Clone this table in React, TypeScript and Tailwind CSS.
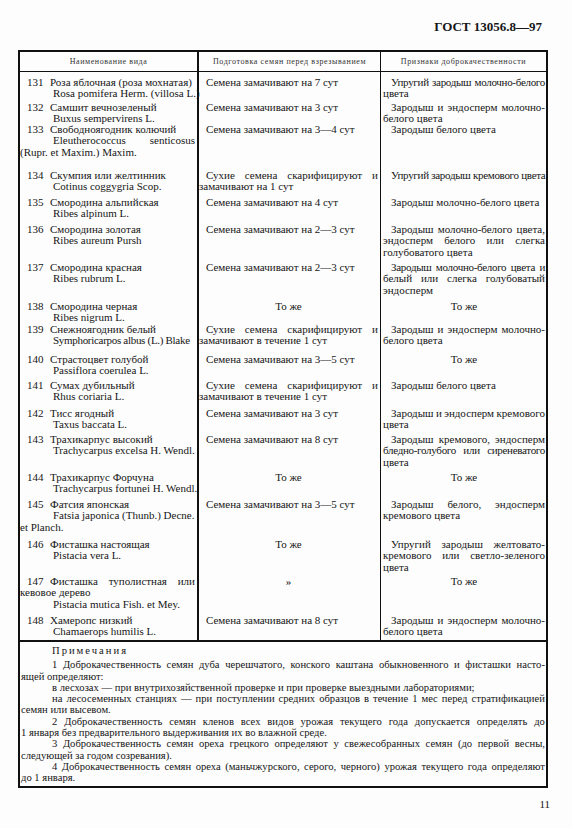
import clsx from "clsx";

type Line = {
  t: string;
  num?: string;
  pl?: string;
  j?: boolean;
  c?: boolean;
  s?: boolean;
};

type Row = {
  h: string;
  a: Line[];
  b: Line[];
  c: Line[];
};

const rows: Row[] = [
  {
    h: "h-[25px]",
    a: [{ num: "131", t: "Роза яблочная (роза мохнатая)" }, { t: "Rosa pomifera Herm. (villosa L.)", pl: "pl-[33px]" }],
    b: [{ t: "Семена замачивают на 7 сут", pl: "pl-[7px]" }],
    c: [{ t: "Упругий зародыш молочно-белого", pl: "pl-[8px]", j: true, s: true }, { t: "цвета" }],
  },
  {
    h: "h-[22px]",
    a: [{ num: "132", t: "Самшит вечнозеленый" }, { t: "Buxus sempervirens L.", pl: "pl-[33px]" }],
    b: [{ t: "Семена замачивают на 3 сут", pl: "pl-[7px]" }],
    c: [{ t: "Зародыш и эндосперм молочно-", pl: "pl-[8px]", j: true }, { t: "белого цвета" }],
  },
  {
    h: "h-[46px]",
    a: [
      { num: "133", t: "Свободноягодник колючий" },
      { t: "Eleutherococcus senticosus", pl: "pl-[33px]", j: true },
      { t: "(Rupr. et Maxim.) Maxim." },
    ],
    b: [{ t: "Семена замачивают на 3—4 сут", pl: "pl-[7px]" }],
    c: [{ t: "Зародыш белого цвета", pl: "pl-[8px]" }],
  },
  {
    h: "h-[27px]",
    a: [{ num: "134", t: "Скумпия или желтинник" }, { t: "Cotinus coggygria Scop.", pl: "pl-[33px]" }],
    b: [{ t: "Сухие семена скарифицируют и", pl: "pl-[7px]", j: true }, { t: "замачивают на 1 сут" }],
    c: [{ t: "Упругий зародыш кремового цвета", pl: "pl-[8px]", s: true }],
  },
  {
    h: "h-[27px]",
    a: [{ num: "135", t: "Смородина альпийская" }, { t: "Ribes alpinum L.", pl: "pl-[33px]" }],
    b: [{ t: "Семена замачивают на 4 сут", pl: "pl-[7px]" }],
    c: [{ t: "Зародыш молочно-белого цвета", pl: "pl-[8px]" }],
  },
  {
    h: "h-[38px]",
    a: [{ num: "136", t: "Смородина золотая" }, { t: "Ribes aureum Pursh", pl: "pl-[33px]" }],
    b: [{ t: "Семена замачивают на 2—3 сут", pl: "pl-[7px]" }],
    c: [
      { t: "Зародыш молочно-белого цвета,", pl: "pl-[8px]", j: true },
      { t: "эндосперм белого или слегка", j: true },
      { t: "голубоватого цвета" },
    ],
  },
  {
    h: "h-[39px]",
    a: [{ num: "137", t: "Смородина красная" }, { t: "Ribes rubrum L.", pl: "pl-[33px]" }],
    b: [{ t: "Семена замачивают на 2—3 сут", pl: "pl-[7px]" }],
    c: [
      { t: "Зародыш молочно-белого цвета и", pl: "pl-[8px]", j: true, s: true },
      { t: "белый или слегка голубоватый", j: true },
      { t: "эндосперм" },
    ],
  },
  {
    h: "h-[23px]",
    a: [{ num: "138", t: "Смородина черная" }, { t: "Ribes nigrum L.", pl: "pl-[33px]" }],
    b: [{ t: "То же", c: true }],
    c: [{ t: "То же", c: true }],
  },
  {
    h: "h-[30px]",
    a: [{ num: "139", t: "Снежноягодник белый" }, { t: "Symphoricarpos albus (L.) Blake", pl: "pl-[33px]", s: true }],
    b: [{ t: "Сухие семена скарифицируют и", pl: "pl-[7px]", j: true }, { t: "замачивают в течение 1 сут" }],
    c: [{ t: "Зародыш и эндосперм молочно-", pl: "pl-[8px]", j: true }, { t: "белого цвета" }],
  },
  {
    h: "h-[26px]",
    a: [{ num: "140", t: "Страстоцвет голубой" }, { t: "Passiflora coerulea L.", pl: "pl-[33px]" }],
    b: [{ t: "Семена замачивают на 3—5 сут", pl: "pl-[7px]" }],
    c: [{ t: "То же", c: true }],
  },
  {
    h: "h-[28px]",
    a: [{ num: "141", t: "Сумах дубильный" }, { t: "Rhus coriaria L.", pl: "pl-[33px]" }],
    b: [{ t: "Сухие семена скарифицируют и", pl: "pl-[7px]", j: true }, { t: "замачивают в течение 1 сут" }],
    c: [{ t: "Зародыш белого цвета", pl: "pl-[8px]" }],
  },
  {
    h: "h-[26px]",
    a: [{ num: "142", t: "Тисс ягодный" }, { t: "Taxus baccata L.", pl: "pl-[33px]" }],
    b: [{ t: "Семена замачивают на 3 сут", pl: "pl-[7px]" }],
    c: [{ t: "Зародыш и эндосперм кремового", pl: "pl-[8px]", j: true }, { t: "цвета" }],
  },
  {
    h: "h-[38px]",
    a: [{ num: "143", t: "Трахикарпус высокий" }, { t: "Trachycarpus excelsa H. Wendl.", pl: "pl-[33px]" }],
    b: [{ t: "Семена замачивают на 8 сут", pl: "pl-[7px]" }],
    c: [
      { t: "Зародыш кремового, эндосперм", pl: "pl-[8px]", j: true },
      { t: "бледно-голубого или сиреневатого", j: true, s: true },
      { t: "цвета" },
    ],
  },
  {
    h: "h-[27px]",
    a: [{ num: "144", t: "Трахикарпус Форчуна" }, { t: "Trachycarpus fortunei H. Wendl.", pl: "pl-[33px]" }],
    b: [{ t: "То же", c: true }],
    c: [{ t: "То же", c: true }],
  },
  {
    h: "h-[40px]",
    a: [
      { num: "145", t: "Фатсия японская" },
      { t: "Fatsia japonica (Thunb.) Decne.", pl: "pl-[33px]" },
      { t: "et Planch." },
    ],
    b: [{ t: "Семена замачивают на 3—5 сут", pl: "pl-[7px]" }],
    c: [{ t: "Зародыш белого, эндосперм", pl: "pl-[8px]", j: true }, { t: "кремового цвета" }],
  },
  {
    h: "h-[37px]",
    a: [{ num: "146", t: "Фисташка настоящая" }, { t: "Pistacia vera L.", pl: "pl-[33px]" }],
    b: [{ t: "То же", c: true }],
    c: [
      { t: "Упругий зародыш желтовато-", pl: "pl-[8px]", j: true },
      { t: "кремового или светло-зеленого", j: true },
      { t: "цвета" },
    ],
  },
  {
    h: "h-[39px]",
    a: [
      { num: "147", t: "Фисташка туполистная или", j: true },
      { t: "кевовое дерево" },
      { t: "Pistacia mutica Fish. et Mey.", pl: "pl-[33px]" },
    ],
    b: [{ t: "»", c: true }],
    c: [{ t: "То же", c: true }],
  },
  {
    h: "h-[30px]",
    a: [{ num: "148", t: "Хамеропс низкий" }, { t: "Chamaerops humilis L.", pl: "pl-[33px]" }],
    b: [{ t: "Семена замачивают на 8 сут", pl: "pl-[7px]" }],
    c: [{ t: "Зародыш и эндосперм молочно-", pl: "pl-[8px]", j: true }, { t: "белого цвета" }],
  },
];

// justified line: words spread edge to edge, never wrapped
const Spread = ({ t, className }: { t: string; className?: string }) => (
  <div className={clsx("flex justify-between gap-x-[2px] whitespace-nowrap", className)}>
    {t.split(" ").map((w, i) => (
      <span key={i}>{w}</span>
    ))}
  </div>
);

const TextLine = ({ x }: { x: Line }) => {
  const sq = x.s && "tracking-[-0.3px]";
  if (x.num) {
    return (
      <div className="flex pl-[7px]">
        <span className="w-[23px] shrink-0">{x.num}</span>
        {x.j ? (
          <Spread t={x.t} className={clsx("flex-1", sq)} />
        ) : (
          <span className={clsx("flex-1 whitespace-nowrap", sq)}>{x.t}</span>
        )}
      </div>
    );
  }
  if (x.c) return <div className="text-center whitespace-nowrap">{x.t}</div>;
  if (x.j) return <Spread t={x.t} className={clsx(x.pl, sq)} />;
  return <div className={clsx(x.pl, sq, "whitespace-nowrap")}>{x.t}</div>;
};

const notes: Line[] = [
  { t: "1 Доброкачественность семян дуба черешчатого, конского каштана обыкновенного и фисташки насто-", pl: "pl-[31px]", j: true },
  { t: "ящей определяют:" },
  { t: "в лесхозах — при внутрихозяйственной проверке и при проверке выездными лабораториями;", pl: "pl-[31px]" },
  { t: "на лесосеменных станциях — при поступлении средних образцов в течение 1 мес перед стратификацией", pl: "pl-[31px]", j: true },
  { t: "семян или высевом." },
  { t: "2 Доброкачественность семян кленов всех видов урожая текущего года допускается определять до", pl: "pl-[31px]", j: true },
  { t: "1 января без предварительного выдерживания их во влажной среде." },
  { t: "3 Доброкачественность семян ореха грецкого определяют у свежесобранных семян (до первой весны,", pl: "pl-[31px]", j: true },
  { t: "следующей за годом созревания)." },
  { t: "4 Доброкачественность семян ореха (маньчжурского, серого, черного) урожая текущего года определяют", pl: "pl-[31px]", j: true },
  { t: "до 1 января." },
];

const App = () => {
  return (
    <div className="w-[572px] h-[828px] bg-[#fdfdfd] text-[#161616] font-['Liberation_Serif',serif] pt-[19px]">
      {/* TITLE */}
      <div className="h-[16px] pr-[30px] text-right text-[13px] leading-[16px] font-bold">ГОСТ 13056.8—97</div>

      {/* TABLE */}
      <div className="ml-[18px] w-[530px] mt-[15px] border-2 border-[#111] text-[11px] leading-[11.3px]">
        <div className="grid grid-cols-[179px_182px_1fr] h-[20px] border-b border-[#111] text-[8px] tracking-[0.6px] text-[#333]">
          <div className="flex items-center justify-center border-r-2 border-[#111]">Наименование вида</div>
          <div className="flex items-center justify-center border-r border-[#111] whitespace-nowrap">Подготовка семян перед взрезыванием</div>
          <div className="flex items-center justify-center">Признаки доброкачественности</div>
        </div>
        {rows.map((r) => (
          <div key={r.a[0].num} className={clsx("grid grid-cols-[179px_182px_1fr]", r.h)}>
            <div className="border-r-2 border-[#111] pt-[5px] pr-[2px]">
              {r.a.map((x, i) => (
                <TextLine key={i} x={x} />
              ))}
            </div>
            <div className="border-r border-[#111] pt-[5px] pr-[2px]">
              {r.b.map((x, i) => (
                <TextLine key={i} x={x} />
              ))}
            </div>
            <div className="pt-[5px] pl-[2px] pr-[1px]">
              {r.c.map((x, i) => (
                <TextLine key={i} x={x} />
              ))}
            </div>
          </div>
        ))}
      </div>

      {/* NOTES */}
      <div className="ml-[18px] w-[530px] border-2 border-t-0 border-[#111] px-[1px] pt-[3px] pb-[2px] text-[10.6px] leading-[11.3px]">
        <div className="pl-[31px] tracking-[2px] mb-[3px]">Примечания</div>
        {notes.map((x, i) => (
          <TextLine key={i} x={x} />
        ))}
      </div>

      {/* PAGE NUMBER */}
      <div className="mt-[9px] pr-[22px] text-right text-[11px] leading-[14px]">11</div>
    </div>
  );
};

export default App;
